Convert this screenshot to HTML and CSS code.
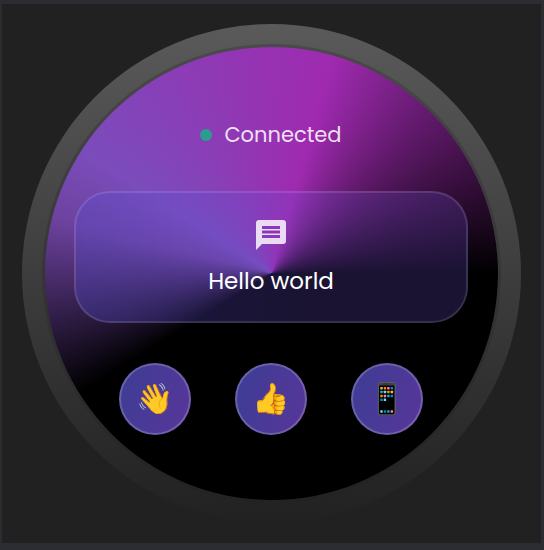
FILE: index.html
```html
<!DOCTYPE html>
<html lang="en">
<head>
<meta charset="utf-8">
<meta name="viewport" content="width=device-width, initial-scale=1">
<title>Watch</title>
<link rel="stylesheet" href="styles.css">
</head>
<body>
<main class="stage">
  <div class="bezel">
    <div class="screen">
      <p class="status"><span class="status-dot"></span>Connected</p>
      <section class="message">
        <svg class="message-icon" viewBox="0 0 36 36" aria-hidden="true">
          <path fill-rule="evenodd" d="M6 3h24a3 3 0 0 1 3 3v18a3 3 0 0 1-3 3H9l-6 6V6a3 3 0 0 1 3-3zM9 9v3h18V9zM9 13.500v3h18v-3zM9 18v3h18v-3z"/>
        </svg>
        <p class="message-text">Hello world</p>
      </section>
      <div class="actions">
        <button class="action" type="button" aria-label="Wave">👋</button>
        <button class="action" type="button" aria-label="Thumbs up">👍</button>
        <button class="action" type="button" aria-label="Phone">📱</button>
      </div>
    </div>
  </div>
</main>
</body>
</html>
```
FILE: styles.css
```css
* {
  box-sizing: border-box;
}

body {
  margin: 0;
  min-height: 100vh;
  display: flex;
  padding: 4px 3px 7px 2px;
  background: #2c2d32;
  font-family: Poppins, Inter, "Open Sans", sans-serif;
}

p {
  margin: 0;
}

.stage {
  flex: 1;
  display: flex;
  align-items: flex-start;
  justify-content: center;
  padding: 20px;
  background: #212121;
}

.bezel {
  width: 100%;
  max-width: 520px;
  aspect-ratio: 1;
  display: flex;
  padding: 20px;
  border-radius: 50%;
  background: linear-gradient(#5a5a5a, #212121);
}

.screen {
  flex: 1;
  display: flex;
  flex-direction: column;
  align-items: center;
  padding: 73px 30px 0 29px;
  border: 3px solid rgba(33, 33, 33, 0.25);
  border-radius: 50%;
  background: conic-gradient(from 16deg, #9f2ab0, #000 74deg 222deg, #6d429f 268deg, #7b4cbb 287deg, #9f2ab0) padding-box;
}

.status {
  display: flex;
  align-items: center;
  gap: 12px;
  color: rgba(255, 255, 255, 0.87);
  font-size: 21px;
  line-height: 30px;
}

.status-dot {
  width: 12px;
  height: 12px;
  border-radius: 50%;
  background: #2a9d8f;
}

.message {
  width: 100%;
  display: flex;
  flex-direction: column;
  align-items: center;
  gap: 12px;
  margin-top: 41px;
  padding: 24px;
  border: 2px solid rgba(255, 255, 255, 0.12);
  border-radius: 36px;
  background: linear-gradient(90deg, rgba(84, 80, 214, 0.3), rgba(108, 80, 208, 0.24) 60%);
}

.message-icon {
  width: 36px;
  height: 36px;
  fill: rgba(255, 255, 255, 0.82);
}

.message-text {
  color: #fff;
  font-size: 23px;
  line-height: 32px;
}

.actions {
  display: flex;
  gap: 44px;
  margin-top: 40px;
}

.action {
  display: grid;
  place-items: center;
  width: 72px;
  height: 72px;
  padding: 0;
  border: 2px solid rgba(255, 255, 255, 0.2);
  border-radius: 50%;
  background: linear-gradient(110deg, #3c3d94, #583699) border-box;
  font: 30px/36px "Noto Color Emoji", sans-serif;
}
```
